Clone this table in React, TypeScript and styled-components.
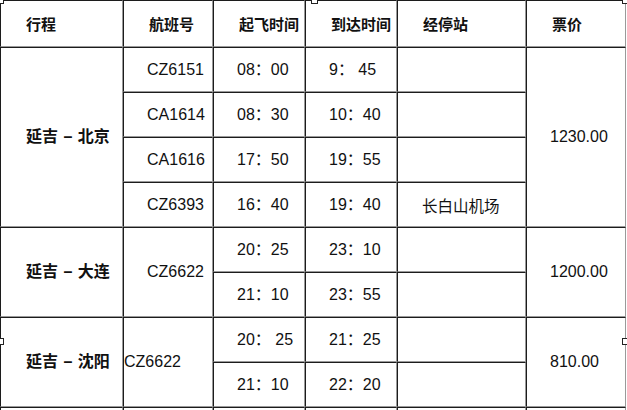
import React from 'react';
import styled, { createGlobalStyle } from 'styled-components';

const GlobalStyle = createGlobalStyle`
  html, body {
    margin: 0;
    padding: 0;
    background: #fff;
    overflow: hidden;
  }
  body {
    width: 627px;
    height: 410px;
    font-family: "Liberation Sans", "Noto Sans CJK SC", sans-serif;
    color: #111;
  }
`;

const Page = styled.div`
  position: relative;
  width: 627px;
  height: 410px;
  overflow: hidden;
`;

const Table = styled.table`
  border-collapse: separate;
  border-spacing: 0;
  table-layout: fixed;
  width: 626px;
`;

const Row = styled.tr<{ $head?: boolean }>`
  height: ${(p) => (p.$head ? '47px' : '45px')};
`;

const Cell = styled.td<{ $flush?: boolean }>`
  box-sizing: border-box;
  padding: 0 0 0 ${(p) => (p.$flush ? '0' : '23px')};
  border-top: 1px solid #1c1c1c;
  border-left: 1px solid #1c1c1c;
  border-right: 1px solid #9a9a9a;
  border-bottom: 1px solid #9a9a9a;
  vertical-align: middle;
  text-align: left;
  white-space: nowrap;
  font-size: 16px;
  line-height: 18px;
`;

const HeadCell = styled(Cell).attrs({ as: 'th' })`
  font-family: "Noto Sans CJK SC", sans-serif;
  font-weight: 700;
  font-size: 15px;
  padding-left: 25px;
`;

const RouteCell = styled(Cell)`
  font-family: "Liberation Sans", "Noto Sans CJK SC", sans-serif;
  font-weight: 700;
  font-size: 16px;
  padding-left: 25px;
  word-spacing: 1px;
`;

const CjkCell = styled(Cell)`
  font-family: "Noto Sans CJK SC", sans-serif;
  font-size: 15.5px;
  padding-left: 24px;
`;

const Handle = styled.div<{ $x: number; $y: number }>`
  position: absolute;
  left: ${(p) => p.$x - 3}px;
  top: ${(p) => p.$y - 3}px;
  width: 5px;
  height: 5px;
  background: #fff;
  border: 1px solid #222;
`;

const widths = [123, 90, 92, 92, 129, 100];

type Flight = { no?: string; dep: string; arr: string; stop?: string };

interface Group {
  route: string;
  price: string;
  sharedNo?: string;
  flushNo?: boolean;
  flights: Flight[];
}

const groups: Group[] = [
  {
    route: '延吉 – 北京',
    price: '1230.00',
    flights: [
      { no: 'CZ6151', dep: '08：00', arr: '9： 45' },
      { no: 'CA1614', dep: '08：30', arr: '10：40' },
      { no: 'CA1616', dep: '17：50', arr: '19：55' },
      { no: 'CZ6393', dep: '16：40', arr: '19：40', stop: '长白山机场' },
    ],
  },
  {
    route: '延吉 – 大连',
    price: '1200.00',
    sharedNo: 'CZ6622',
    flights: [
      { dep: '20：25', arr: '23：10' },
      { dep: '21：10', arr: '23：55' },
    ],
  },
  {
    route: '延吉 – 沈阳',
    price: '810.00',
    sharedNo: 'CZ6622',
    flushNo: true,
    flights: [
      { dep: '20： 25', arr: '21：25' },
      { dep: '21：10', arr: '22：20' },
    ],
  },
];

export default function App() {
  return (
    <Page>
      <GlobalStyle />
      <Table>
        <colgroup>
          {widths.map((w, i) => (
            <col key={i} style={{ width: w }} />
          ))}
        </colgroup>
        <thead>
          <Row $head>
            <HeadCell>行程</HeadCell>
            <HeadCell>航班号</HeadCell>
            <HeadCell>起飞时间</HeadCell>
            <HeadCell>到达时间</HeadCell>
            <HeadCell>经停站</HeadCell>
            <HeadCell>票价</HeadCell>
          </Row>
        </thead>
        <tbody>
          {groups.map((g) =>
            g.flights.map((f, i) => (
              <Row key={g.route + i}>
                {i === 0 && <RouteCell rowSpan={g.flights.length}>{g.route}</RouteCell>}
                {g.sharedNo ? (
                  i === 0 && (
                    <Cell rowSpan={g.flights.length} $flush={g.flushNo}>
                      {g.sharedNo}
                    </Cell>
                  )
                ) : (
                  <Cell>{f.no}</Cell>
                )}
                <Cell>{f.dep}</Cell>
                <Cell>{f.arr}</Cell>
                <CjkCell>{f.stop}</CjkCell>
                {i === 0 && <Cell rowSpan={g.flights.length}>{g.price}</Cell>}
              </Row>
            )),
          )}
          <Row>
            <RouteCell />
            <Cell />
            <Cell />
            <Cell />
            <CjkCell />
            <Cell />
          </Row>
        </tbody>
      </Table>
      <Handle $x={0} $y={0} />
      <Handle $x={314} $y={0} />
      <Handle $x={625} $y={0} />
      <Handle $x={0} $y={341} />
      <Handle $x={625} $y={341} />
    </Page>
  );
}
